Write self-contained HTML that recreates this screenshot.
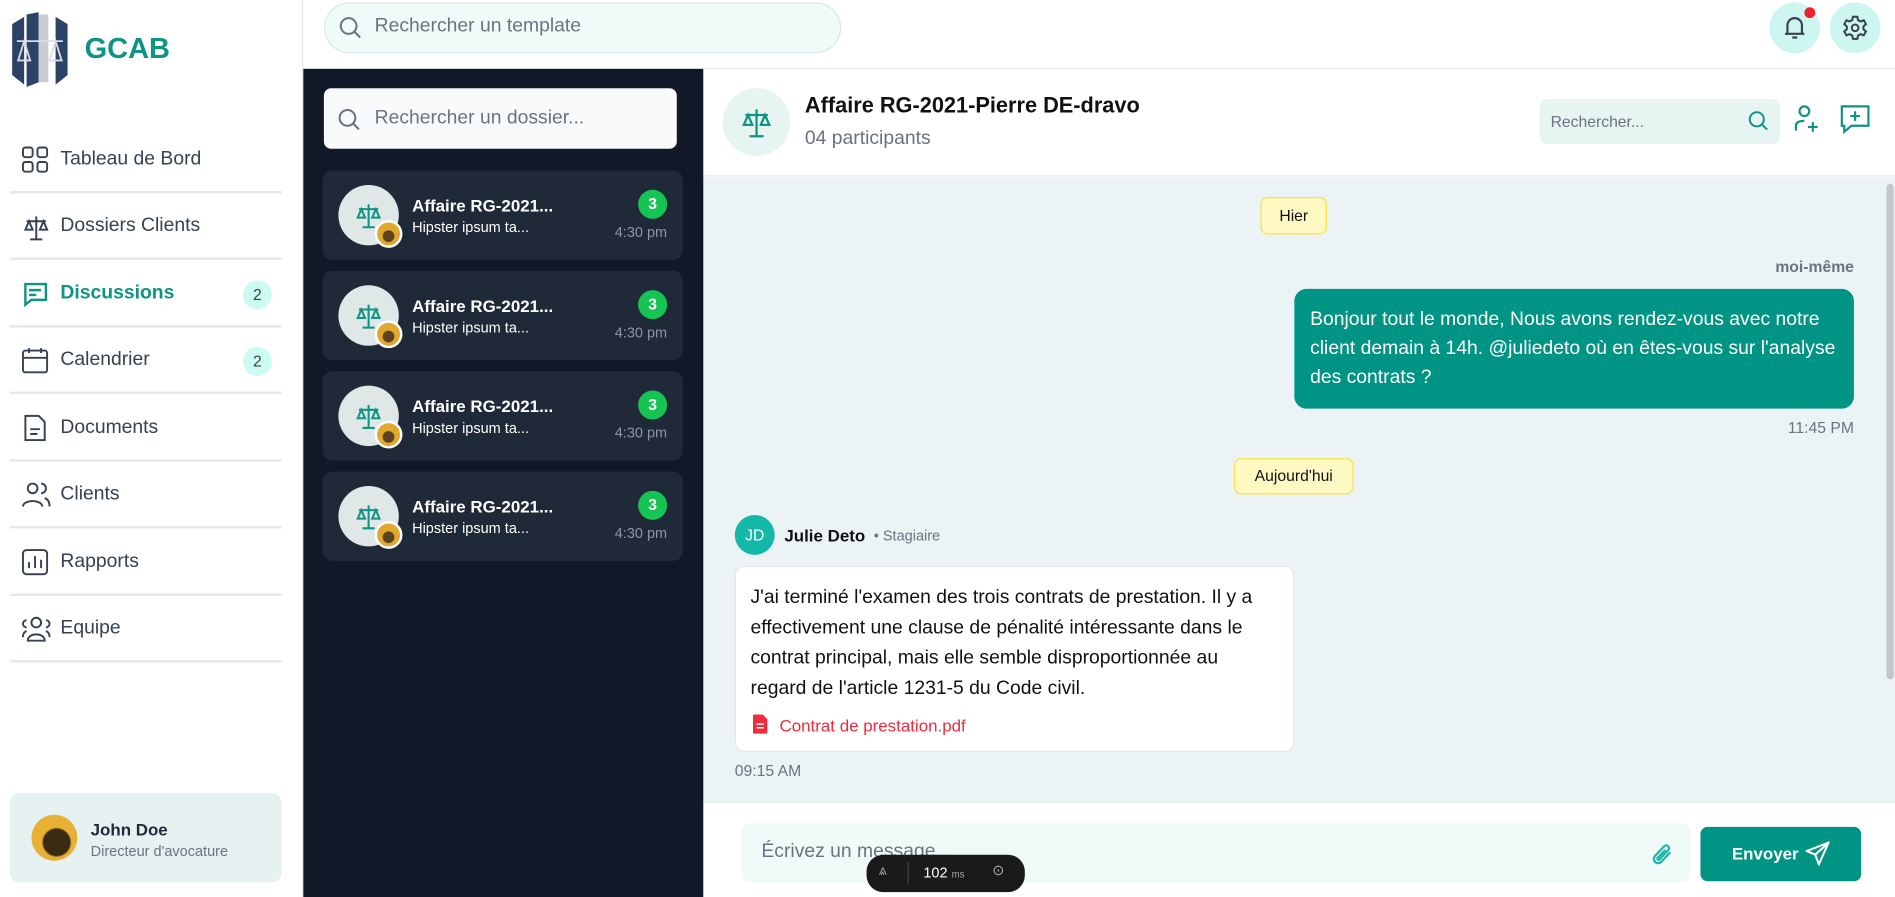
<!DOCTYPE html>
<html><head><meta charset="utf-8"><style>
*{box-sizing:border-box;margin:0;padding:0}
html,body{width:1895px;height:897px;overflow:hidden;background:#fff;font-family:"Liberation Sans",sans-serif}
#w{position:absolute;left:0;top:0;width:1568px;height:742px;transform:scale(1.20855,1.2089);transform-origin:0 0;}
.a{position:absolute}
.nav{position:absolute;left:8px;width:225px;height:55px;border-bottom:2px solid #e5e7eb;color:#374151;font-size:16px}
.nav span{position:absolute;left:42px;top:18px}
.nav svg{position:absolute;left:10px;top:16px}
.badge{position:absolute;left:193px;top:16px;width:24px;height:24px;border-radius:50%;background:#ccfbf1;color:#374151;font-size:13px;text-align:center;line-height:24px}
.card{position:absolute;left:267px;width:298px;height:74px;background:#1f2937;border-radius:8px}
.card .av{position:absolute;left:13px;top:12px;width:50px;height:50px;border-radius:50%;background:#dfe7e7}
.card .sm{position:absolute;left:43px;top:41px;width:23px;height:23px;border-radius:50%;background:radial-gradient(circle at 50% 60%,#5b4320 30%,#e0a82e 35%);border:2px solid #fff}
.card .t{position:absolute;left:74px;top:21px;color:#fff;font-weight:bold;font-size:14px}
.card .s{position:absolute;left:74px;top:40px;color:#fff;font-size:12px}
.card .g{position:absolute;left:261px;top:16px;width:24px;height:24px;border-radius:50%;background:#16c453;color:#fff;font-weight:bold;font-size:13px;text-align:center;line-height:24px}
.card .tm{position:absolute;right:13px;top:44px;color:#8b95a3;font-size:12px}
.chip{position:absolute;background:#fef9c3;border:1px solid #fde047;border-radius:6px;font-size:13px;color:#111;text-align:center}
</style></head><body><div id="w">
<!-- sidebar -->
<div class="a" style="left:0;top:0;width:251px;height:742px;border-right:1px solid #e5e7eb;background:#fff"></div>
<svg class="a" style="left:10px;top:10px" width="46" height="62" viewBox="0 0 46 62"><path d="M0 10 L10 4 V60 L0 52Z" fill="#2c4266"/><path d="M46 10 L36 4 V60 L46 52Z" fill="#2c4266"/><path d="M12 2 L22 0 V58 L12 62Z" fill="#2c4266"/><rect x="22" y="2" width="8" height="56" fill="#c8ccd3"/><path d="M4 24 H42 M10 24 L5 40 H15Z M36 24 L31 40 H41Z" stroke="#d9dde3" stroke-width="1.5" fill="none"/></svg>
<div class="a" style="left:70px;top:27px;font-size:24px;font-weight:bold;color:#0e9384">GCAB</div>
<div class="nav" style="top:105px"><svg width="22" height="22" viewBox="0 0 22 22" fill="none" stroke="#374151" stroke-width="1.6"><rect x="1" y="1" width="8" height="8" rx="2"/><rect x="13" y="1" width="8" height="8" rx="2"/><rect x="1" y="13" width="8" height="8" rx="2"/><rect x="13" y="13" width="8" height="8" rx="2"/></svg><span>Tableau de Bord</span></div>
<div class="nav" style="top:160px"><svg width="24" height="24" viewBox="0 0 24 24" fill="none" stroke="#374151" stroke-width="1.6"><path d="M12 3V22M7 22H17M4 7H20M6 7L3 14H9ZM18 7L15 14H21Z"/></svg><span>Dossiers Clients</span></div>
<div class="nav" style="top:216px;color:#0e9384;font-weight:bold"><svg width="22" height="22" viewBox="0 0 22 22" fill="none" stroke="#0e9384" stroke-width="2"><path d="M2 3H20V16H8L3 20V3Z"/><path d="M6 8H16M6 12H12"/></svg><span>Discussions</span><div class="badge" style="font-weight:normal">2</div></div>
<div class="nav" style="top:271px"><svg width="22" height="22" viewBox="0 0 22 22" fill="none" stroke="#374151" stroke-width="1.6"><rect x="1" y="3" width="20" height="18" rx="2"/><path d="M1 9H21M6 1V5M16 1V5"/></svg><span>Calendrier</span><div class="badge">2</div></div>
<div class="nav" style="top:327px"><svg width="22" height="22" viewBox="0 0 22 22" fill="none" stroke="#374151" stroke-width="1.6"><path d="M3 1H14L19 6V21H3Z"/><path d="M7 12H15M7 16H13"/></svg><span>Documents</span></div>
<div class="nav" style="top:382px"><svg width="24" height="22" viewBox="0 0 24 22" fill="none" stroke="#374151" stroke-width="1.6"><circle cx="9" cy="6" r="4"/><path d="M1 21C1 15 17 15 17 21M16 2A4 4 0 0 1 16 10M19 14C22 15 23 18 23 21"/></svg><span>Clients</span></div>
<div class="nav" style="top:438px"><svg width="22" height="22" viewBox="0 0 22 22" fill="none" stroke="#374151" stroke-width="1.6"><rect x="1" y="1" width="20" height="20" rx="3"/><path d="M6 16V11M11 16V6M16 16V9"/></svg><span>Rapports</span></div>
<div class="nav" style="top:493px"><svg width="24" height="22" viewBox="0 0 24 22" fill="none" stroke="#374151" stroke-width="1.6"><circle cx="12" cy="6" r="4"/><path d="M5 21C5 14 19 14 19 21ZM4 4A3 3 0 0 0 4 10M20 4A3 3 0 0 1 20 10M1 18C1 15 2 14 4 13M23 18C23 15 22 14 20 13"/></svg><span>Equipe</span></div>
<div class="a" style="left:8px;top:656px;width:225px;height:74px;background:#e6f2f2;border-radius:8px"></div>
<div class="a" style="left:26px;top:674px;width:38px;height:38px;border-radius:50%;background:radial-gradient(circle at 55% 60%,#3b2a12 35%,#e8b135 40%)"></div>
<div class="a" style="left:75px;top:678px;font-size:14px;font-weight:bold;color:#1f2937">John Doe</div>
<div class="a" style="left:75px;top:697px;font-size:12px;color:#6b7280">Directeur d'avocature</div>
<!-- topbar -->
<div class="a" style="left:251px;top:0;width:1317px;height:57px;border-bottom:1px solid #e5e7eb;background:#fff"></div>
<div class="a" style="left:268px;top:2px;width:428px;height:42px;border-radius:21px;background:#f0faf9;border:1px solid #d5ebe8"></div>
<svg class="a" style="left:280px;top:13px" width="20" height="20" viewBox="0 0 20 20" fill="none" stroke="#6b7280" stroke-width="1.7"><circle cx="8.5" cy="8.5" r="6.5"/><path d="M13.5 13.5L18 18"/></svg>
<div class="a" style="left:310px;top:13px;font-size:16px;color:#6b7280">Rechercher un template</div>
<div class="a" style="left:1464px;top:2px;width:42px;height:42px;border-radius:50%;background:#ccf6ef"></div>
<svg class="a" style="left:1475px;top:12px" width="20" height="22" viewBox="0 0 20 22" fill="none" stroke="#374151" stroke-width="1.8"><path d="M4 16V9A6 6 0 0 1 16 9V16H18H2ZM8 19H12"/></svg>
<div class="a" style="left:1493px;top:6px;width:9px;height:9px;border-radius:50%;background:#ef2030"></div>
<div class="a" style="left:1514px;top:2px;width:42px;height:42px;border-radius:50%;background:#ccf6ef"></div>
<svg class="a" style="left:1524px;top:12px" width="22" height="22" viewBox="0 0 24 24" fill="none" stroke="#374151" stroke-width="1.8"><circle cx="12" cy="12" r="3"/><path d="M10 2H14L14.6 5 17 6.3 19.8 5.2 21.8 8.7 19.5 10.7V13.3L21.8 15.3 19.8 18.8 17 17.7 14.6 19 14 22H10L9.4 19 7 17.7 4.2 18.8 2.2 15.3 4.5 13.3V10.7L2.2 8.7 4.2 5.2 7 6.3 9.4 5Z"/></svg>
<!-- dark panel -->
<div class="a" style="left:251px;top:57px;width:331px;height:685px;background:#111827"></div>
<div class="a" style="left:268px;top:73px;width:292px;height:50px;background:#f8fafc;border-radius:6px"></div>
<svg class="a" style="left:279px;top:89px" width="20" height="20" viewBox="0 0 20 20" fill="none" stroke="#6b7280" stroke-width="1.7"><circle cx="8.5" cy="8.5" r="6.5"/><path d="M13.5 13.5L18 18"/></svg>
<div class="a" style="left:310px;top:89px;font-size:16px;color:#6b7280">Rechercher un dossier...</div>
<div class="card" style="top:141px"><div class="av"><svg style="margin:13px 0 0 13px" width="24" height="24" viewBox="0 0 24 24" fill="none" stroke="#0e9384" stroke-width="1.7"><path d="M12 3V22M7 22H17M4 7H20M6 7L3 14H9ZM18 7L15 14H21Z"/></svg></div><div class="sm"></div><div class="t">Affaire RG-2021...</div><div class="s">Hipster ipsum ta...</div><div class="g">3</div><div class="tm">4:30 pm</div></div>
<div class="card" style="top:224px"><div class="av"><svg style="margin:13px 0 0 13px" width="24" height="24" viewBox="0 0 24 24" fill="none" stroke="#0e9384" stroke-width="1.7"><path d="M12 3V22M7 22H17M4 7H20M6 7L3 14H9ZM18 7L15 14H21Z"/></svg></div><div class="sm"></div><div class="t">Affaire RG-2021...</div><div class="s">Hipster ipsum ta...</div><div class="g">3</div><div class="tm">4:30 pm</div></div>
<div class="card" style="top:307px"><div class="av"><svg style="margin:13px 0 0 13px" width="24" height="24" viewBox="0 0 24 24" fill="none" stroke="#0e9384" stroke-width="1.7"><path d="M12 3V22M7 22H17M4 7H20M6 7L3 14H9ZM18 7L15 14H21Z"/></svg></div><div class="sm"></div><div class="t">Affaire RG-2021...</div><div class="s">Hipster ipsum ta...</div><div class="g">3</div><div class="tm">4:30 pm</div></div>
<div class="card" style="top:390px"><div class="av"><svg style="margin:13px 0 0 13px" width="24" height="24" viewBox="0 0 24 24" fill="none" stroke="#0e9384" stroke-width="1.7"><path d="M12 3V22M7 22H17M4 7H20M6 7L3 14H9ZM18 7L15 14H21Z"/></svg></div><div class="sm"></div><div class="t">Affaire RG-2021...</div><div class="s">Hipster ipsum ta...</div><div class="g">3</div><div class="tm">4:30 pm</div></div>
<!-- chat header -->
<div class="a" style="left:582px;top:57px;width:986px;height:89px;background:#fff;border-bottom:1px solid #e5e7eb"></div>
<div class="a" style="left:598px;top:73px;width:56px;height:56px;border-radius:50%;background:#e6f4f2"></div>
<svg class="a" style="left:612px;top:87px" width="28" height="28" viewBox="0 0 24 24" fill="none" stroke="#0e9384" stroke-width="1.6"><path d="M12 3V22M7 22H17M4 7H20M6 7L3 14H9ZM18 7L15 14H21Z"/></svg>
<div class="a" style="left:666px;top:77px;font-size:18px;font-weight:bold;color:#111">Affaire RG-2021-Pierre DE-dravo</div>
<div class="a" style="left:666px;top:106px;font-size:16px;color:#6b7280">04 participants</div>
<div class="a" style="left:1274px;top:82px;width:199px;height:37px;background:#e6f4f2;border-radius:6px"></div>
<div class="a" style="left:1283px;top:93px;font-size:13px;color:#6b7280">Rechercher...</div>
<svg class="a" style="left:1446px;top:91px" width="18" height="18" viewBox="0 0 20 20" fill="none" stroke="#0e9384" stroke-width="1.8"><circle cx="8.5" cy="8.5" r="6.5"/><path d="M13.5 13.5L18 18"/></svg>
<svg class="a" style="left:1484px;top:86px" width="22" height="24" viewBox="0 0 22 24" fill="none" stroke="#0e9384" stroke-width="1.8"><circle cx="9" cy="6" r="4"/><path d="M2 22V18C2 15 5 14 9 14M16 15V23M12 19H20"/></svg>
<svg class="a" style="left:1522px;top:86px" width="26" height="26" viewBox="0 0 26 26" fill="none" stroke="#0e9384" stroke-width="1.8"><path d="M2 2H24V18H10L4 23V18H2Z"/><path d="M13 6V14M9 10H17"/></svg>
<!-- chat area -->
<div class="a" style="left:582px;top:147px;width:986px;height:516px;background:#ebf3f4"></div>
<div class="a" style="left:1561px;top:152px;width:6px;height:410px;background:#c1c7cc;border-radius:3px"></div>
<div class="chip" style="left:1043px;top:163px;width:55px;height:31px;line-height:29px">Hier</div>
<div class="a" style="right:34px;top:213px;font-size:13px;font-weight:bold;color:#6b7280">moi-même</div>
<div class="a" style="left:1071px;top:239px;width:463px;height:99px;background:#009485;border-radius:10px;color:#fff;font-size:16px;line-height:24px;padding:14px 13px">Bonjour tout le monde, Nous avons rendez-vous avec notre client demain à 14h. @juliedeto où en êtes-vous sur l'analyse des contrats ?</div>
<div class="a" style="right:34px;top:346px;font-size:13px;color:#6b7280">11:45 PM</div>
<div class="chip" style="left:1021px;top:379px;width:99px;height:30px;line-height:28px">Aujourd'hui</div>
<div class="a" style="left:608px;top:426px;width:33px;height:33px;border-radius:50%;background:#14b8a6;color:#fff;font-size:13px;text-align:center;line-height:33px">JD</div>
<div class="a" style="left:649px;top:435px;font-size:14px;font-weight:bold;color:#111">Julie Deto</div>
<div class="a" style="left:723px;top:436px;font-size:12px;color:#6b7280">• Stagiaire</div>
<div class="a" style="left:608px;top:468px;width:463px;height:154px;background:#fff;border:1px solid #e5e7eb;border-radius:8px;padding:13px 12px;font-size:16px;line-height:25px;color:#111">J'ai terminé l'examen des trois contrats de prestation. Il y a effectivement une clause de pénalité intéressante dans le contrat principal, mais elle semble disproportionnée au regard de l'article 1231-5 du Code civil.</div>
<svg class="a" style="left:623px;top:591px" width="12" height="16" viewBox="0 0 12 16"><path d="M0 1Q0 0 1 0H8L12 4V15Q12 16 11 16H1Q0 16 0 15Z" fill="#ef2b3c"/><path d="M3 8H9M3 11H9" stroke="#fff" stroke-width="1.3"/></svg>
<div class="a" style="left:645px;top:592px;font-size:14px;color:#ef2b3c">Contrat de prestation.pdf</div>
<div class="a" style="left:608px;top:630px;font-size:13px;color:#6b7280">09:15 AM</div>
<!-- input -->
<div class="a" style="left:582px;top:663px;width:986px;height:79px;background:#fff;border-top:1px solid #e5e7eb"></div>
<div class="a" style="left:613px;top:681px;width:786px;height:49px;background:#f0faf9;border-radius:8px"></div>
<div class="a" style="left:630px;top:696px;font-size:16px;color:#6b7280">Écrivez un message...</div>
<svg class="a" style="left:1366px;top:696px" width="20" height="22" viewBox="0 0 20 22" fill="none" stroke="#14b8a6" stroke-width="1.8"><path d="M16 9L8.5 17A3.5 3.5 0 0 1 3.5 12L11 4A2.3 2.3 0 0 1 14.3 7.3L7 15A1 1 0 0 1 5.6 13.6L12 7"/></svg>
<div class="a" style="left:1407px;top:684px;width:133px;height:45px;background:#009485;border-radius:6px"></div>
<div class="a" style="left:1433px;top:698px;font-size:14px;font-weight:bold;color:#fff">Envoyer</div>
<svg class="a" style="left:1494px;top:696px" width="20" height="20" viewBox="0 0 20 20" fill="none" stroke="#fff" stroke-width="1.7"><path d="M19 1L1 8L8 11L11 19ZM19 1L8 11"/></svg>
<!-- overlay -->
<div class="a" style="left:717px;top:707px;width:131px;height:31px;background:#1a1a1a;border-radius:14px;color:#fff;font-size:12px"><span style="position:absolute;left:10px;top:6px;color:#aaa">⩓</span><span style="position:absolute;left:34px;top:6px;width:1px;height:18px;background:#444"></span><span style="position:absolute;left:47px;top:8px">102 <small style="font-size:8px;color:#aaa">ms</small></span><span style="position:absolute;left:104px;top:6px;color:#aaa">⊙</span></div>
</div></body></html>
